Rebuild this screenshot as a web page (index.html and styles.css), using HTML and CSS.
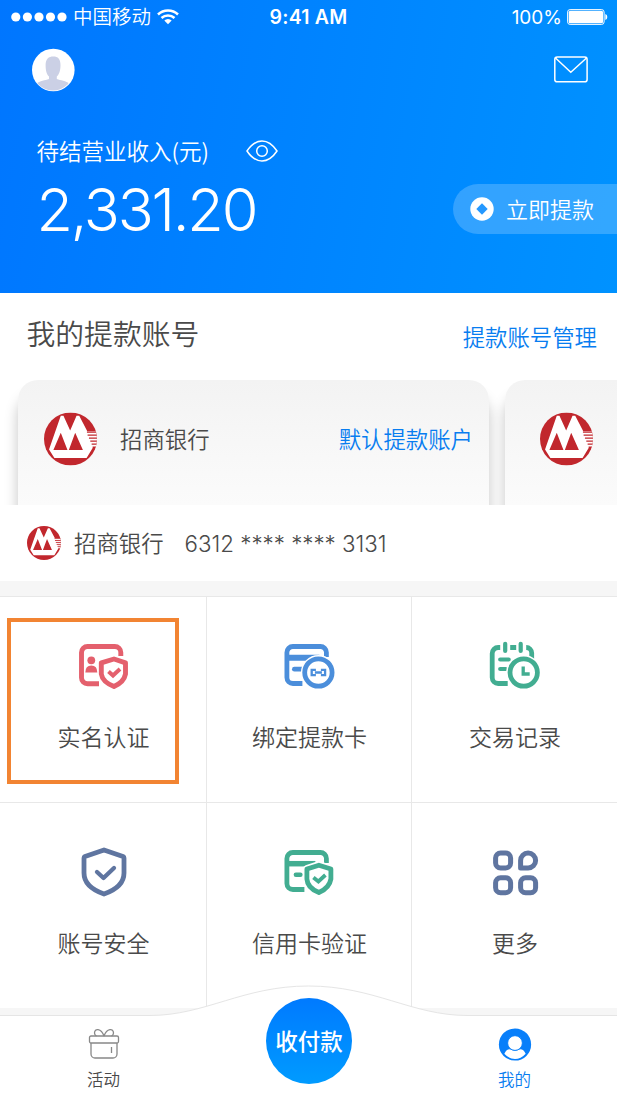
FILE: index.html
```html
<!DOCTYPE html>
<html lang="zh-CN">
<head>
<meta charset="utf-8">
<title>我的</title>
<link rel="stylesheet" href="styles.css">
</head>
<body>
<svg class="defs" width="0" height="0">
  <symbol id="cmb" viewBox="0 0 158 158">
    <clipPath id="disc"><circle cx="79" cy="79" r="79"/></clipPath>
    <g clip-path="url(#disc)">
      <rect width="158" height="158" fill="#c1272d"/>
      <path d="M50 10H58L78 54L97 10H105L129 56H158V106H145L127 136H31L15 110Z" fill="#fff"/>
      <path d="M50 60L70 112H28ZM93 60L116 112H74Z" fill="#c1272d"/>
      <path d="M128 58.500H158M130 67.500H158M134 76.500H158M138 85.500H158M142 94.500H158M145 103.500H158" stroke="#c1272d" stroke-width="4"/>
    </g>
  </symbol>
</svg>
<main class="screen">
  <header class="hero">
    <div class="status">
      <div class="carrier">
        <svg width="56" height="10" viewBox="0 0 56 10" fill="#fff"><circle cx="4.800" cy="5" r="4.600"/><circle cx="16.400" cy="5" r="4.600"/><circle cx="28" cy="5" r="4.600"/><circle cx="39.500" cy="5" r="4.600"/><circle cx="51" cy="5" r="4.600"/></svg>
        <span class="operator">中国移动</span>
        <svg width="22" height="16" viewBox="0 0 22 16" fill="none" stroke="#fff" stroke-width="2.500"><path d="M1 5.500a14.300 14.300 0 0 1 20 0M4.500 9a9.400 9.400 0 0 1 13 0"/><path d="M7.300 11.500a5.300 5.300 0 0 1 7.400 0L11 15.300z" fill="#fff" stroke="none"/></svg>
      </div>
      <span class="time">9:41 AM</span>
      <div class="power">
        <span>100%</span>
        <svg width="41" height="16" viewBox="0 0 41 16"><rect x=".6" y=".6" width="36.500" height="14.800" rx="2.500" fill="none" stroke="#fff" stroke-width="1"/><rect x="1.700" y="1.700" width="34.300" height="12.600" rx="1.500" fill="#fff"/><path d="M38.300 5q2 .5 2 3t-2 3z" fill="#fff"/></svg>
      </div>
    </div>
    <div class="toolbar">
      <svg width="44" height="44" viewBox="0 0 44 44"><clipPath id="face"><circle cx="22" cy="22" r="20.500"/></clipPath><circle cx="22.300" cy="22" r="21.300" fill="#fff"/><g clip-path="url(#face)" fill="#cbd0e5"><path d="M14.600 17c0-6 3-8.500 7.700-8.500s7.200 2.500 7.200 8.500c0 6-1.500 9.500-3.700 11.500V31c4 1.500 9 1.500 13 5v9H5v-9c4-3.500 9-3.500 13-5v-2.500c-2.200-2-3.400-5.500-3.400-11.500z"/></g></svg>
      <svg width="36" height="28" viewBox="0 0 36 28" fill="none" stroke="#fff" stroke-width="1.500"><rect x="1.800" y="1" width="32.300" height="24.800" rx="2.400"/><path d="M2.500 2L17.800 16.200L33.500 2"/></svg>
    </div>
    <div class="income">
      <div>
        <div class="income-label"><span>待结营业收入(元)</span>
          <svg width="34" height="26" viewBox="0 -2 34 26" fill="none" stroke="#fff" stroke-width="1.500"><path d="M2 12C5 7.500 10 2 17 2s12 5.500 15 10c-3 4.500-8 10-15 10S5 16.500 2 12z"/><circle cx="17" cy="12" r="5.300"/></svg>
        </div>
        <div class="amount">2,331.20</div>
      </div>
      <div class="withdraw">
        <svg width="24" height="24" viewBox="0 0 24 24"><circle cx="12" cy="12" r="11.700" fill="#fff"/><path d="M12 6.300L17.700 12L12 17.700L6.300 12Z" fill="#2498ff"/></svg>
        <span>立即提款</span>
      </div>
    </div>
  </header>
  <section class="accounts">
    <div class="heading"><h2>我的提款账号</h2><span class="link">提款账号管理</span></div>
    <div class="cards">
      <div class="card"><svg width="53" height="54"><use href="#cmb"/></svg><span class="bank">招商银行</span><span class="link">默认提款账户</span></div>
      <div class="card next"><svg width="53" height="54"><use href="#cmb"/></svg></div>
    </div>
    <div class="account"><svg width="34" height="34"><use href="#cmb"/></svg><span class="bank">招商银行</span><span class="number">6312 **** **** 3131</span></div>
  </section>
  <section class="grid">
    <div class="cell selected">
      <svg width="50" height="50" viewBox="0 0 50 50" fill="none" stroke="#e4606d" stroke-width="4.900"><path d="M41.800 13V9.500a6 6 0 0 0-6-6H8.500a6 6 0 0 0-6 6v25.300a6 6 0 0 0 6 6H20"/><circle cx="12.300" cy="17.300" r="3.900" fill="#e4606d" stroke="none"/><path d="M6.300 29.500q0-7 6-7t6 7z" fill="#e4606d" stroke="none"/><path d="M35 16L46.500 19.800V31Q45 39 35 43.500Q25 39 23.500 31V19.800Z" stroke-linejoin="round" stroke="#fff" stroke-width="8"/><path d="M35 16L46.500 19.800V31Q45 39 35 43.500Q23.500 39 22.300 31V19.800Z" stroke-linejoin="round" fill="#fff"/><path d="M29.500 28.500L34 32.500L41 26" stroke-width="4"/></svg>
      <span>实名认证</span>
    </div>
    <div class="cell">
      <svg width="50" height="50" viewBox=".6 0 50 50" fill="none" stroke="#4b8edb" stroke-width="4.800"><path d="M42 14V9.500a6 6 0 0 0-6-6H8.500a6 6 0 0 0-6 6V34.500a6 6 0 0 0 6 6H18"/><path d="M2 14.700H35" stroke-width="6"/><path d="M10 26.200H18" stroke-linecap="round"/><circle cx="34" cy="29.500" r="15.500" stroke="#fff" stroke-width="4"/><circle cx="34" cy="29.500" r="13.700" fill="#fff"/><path d="M31.500 26.800H27.300V32.200H31.500M36.500 26.800H40.700V32.200H36.500M30.500 29.500H37.500" stroke-width="2.300"/></svg>
      <span>绑定提款卡</span>
    </div>
    <div class="cell">
      <svg width="50" height="50" viewBox=".3 0 50 50" fill="none" stroke="#42ad91" stroke-width="4.800"><path d="M10.500 4.500H8.500a6 6 0 0 0-6 6V34.500a6 6 0 0 0 6 6H18M20.500 4.500H26.500M36.500 4.500a5.500 5.500 0 0 1 5.500 5.500V16"/><path d="M15.500 .8V8M31 .8V8M10.500 16.500H19M10.500 26H16" stroke-linecap="round" stroke-width="4.200"/><circle cx="34" cy="29.500" r="15.500" stroke="#fff" stroke-width="4"/><circle cx="34" cy="29.500" r="13.700" fill="#fff"/><path d="M33.500 23.500V31H40" stroke-width="3.300"/></svg>
      <span>交易记录</span>
    </div>
    <div class="cell">
      <svg width="50" height="50" viewBox="0 1 50 50" fill="none" stroke="#5f75a0" stroke-width="4.800" stroke-linejoin="round" stroke-linecap="round"><path d="M25 2L44 8.500Q45 9 45 10V25Q45 39 25 46Q5 39 5 25V10Q5 9 6 8.500Z"/><path d="M18 24L24.500 30L35 20" stroke-width="4.300"/></svg>
      <span>账号安全</span>
    </div>
    <div class="cell">
      <svg width="50" height="50" viewBox=".6 0 50 50" fill="none" stroke="#42ad91" stroke-width="4.800"><path d="M42 14V9.500a6 6 0 0 0-6-6H8.500a6 6 0 0 0-6 6V34.500a6 6 0 0 0 6 6H20"/><path d="M2 14.700H31" stroke-width="5.500"/><path d="M11.500 25.700H16" stroke-linecap="round" stroke-width="4.500"/><path d="M34.500 16L46.500 20V30Q45 39 34.500 43.500Q23 39 22.500 30V20Z" stroke="#fff" stroke-width="8" stroke-linejoin="round"/><path d="M34.500 16.200L46.500 20V30Q45 39 34.500 43.500Q23 39 22.500 30V20Z" fill="#fff" stroke-linejoin="round"/><path d="M29 28.500L34 32.500L41 26" stroke-width="3.800"/></svg>
      <span>信用卡验证</span>
    </div>
    <div class="cell">
      <svg width="50" height="50" viewBox="-.6 0 50 50" fill="none" stroke="#5f75a0" stroke-width="5"><rect x="5" y="4" width="15" height="15" rx="5"/><path d="M30 19V11.500A7.500 7.500 0 1 1 37.500 19Z" stroke-linejoin="round"/><rect x="5" y="28.700" width="15" height="15" rx="5"/><rect x="30" y="28.700" width="15" height="15" rx="5"/></svg>
      <span>更多</span>
    </div>
  </section>
  <nav class="tabs">
    <svg class="tabs-shape" width="617" height="112" viewBox="0 0 617 112"><path d="M-2 30.500H150C205 30.500 243 1 308.500 1S412 30.500 467 30.500H619V114H-2Z" fill="#fff" stroke="#e5e5e5"/></svg>
    <div class="tab">
      <svg width="32" height="32" viewBox="0 0 32 32" fill="none" stroke="#888" stroke-width="1.300"><rect x="1.500" y="8" width="29" height="7" rx="1.500"/><path d="M3 15V26a4 4 0 0 0 4 4H25a4 4 0 0 0 4-4V15M23.500 19V25M16 8C13 0 6.500 0 6.500 5q0 2 2 3M16 8c3-8 9.500-8 9.500-3q0 2-2 3"/></svg>
      <span>活动</span>
    </div>
    <div class="pay">收付款</div>
    <div class="tab active">
      <svg width="34" height="34" viewBox="0 0 34 34"><circle cx="17" cy="17" r="16.600" fill="#087ffa"/><path d="M6 26.500Q9 20.500 13.500 22.500Q17 24.500 20.500 22.500Q25 20.500 28 26.500Q23 32 17 32T6 26.500Z" fill="#fff"/><circle cx="17" cy="15.500" r="7.600" fill="#fff" stroke="#087ffa" stroke-width="1"/></svg>
      <span>我的</span>
    </div>
  </nav>
</main>
</body>
</html>
```
FILE: styles.css
```css
* { box-sizing: border-box; }
body { margin: 0; background: #fff; color: #4a4a4a; font-family: "Noto Sans CJK SC", sans-serif; font-weight: 350; }
svg { display: block; flex: none; overflow: visible; }
.defs { position: absolute; }
.screen { width: 617px; height: 1097px; overflow: hidden; }
.hero { height: 293px; color: #fff; background: linear-gradient(100deg, #0076ff, #0092ff); }
.status { height: 34px; padding: 0 9px 0 11px; display: grid; grid-template-columns: 1fr auto 1fr; align-items: center; font-family: Inter, "Noto Sans CJK SC", sans-serif; }
.carrier, .power { display: flex; align-items: center; }
.carrier { gap: 6px; }
.operator { font-size: 19.500px; line-height: 28px; }
.time { font-size: 19.500px; font-weight: 600; letter-spacing: .2px; margin-right: 2px; }
.power { justify-content: flex-end; gap: 5px; font-size: 19px; font-weight: 400; }
.toolbar { height: 72px; padding: 0 28px 0 31px; display: flex; align-items: center; justify-content: space-between; }
.income { padding: 27px 0 0 36.500px; display: flex; justify-content: space-between; }
.income-label { height: 34px; display: flex; align-items: center; gap: 36px; font-size: 22.500px; }
.amount { height: 82px; padding-top: 1px; font: 350 59.500px/82px Inter, sans-serif; letter-spacing: -2.200px; }
.withdraw { width: 164px; height: 50px; margin-top: 51px; padding-left: 17px; display: flex; align-items: center; gap: 12px; border-radius: 25px 0 0 25px; background: rgba(255,255,255,.2); font-size: 22px; line-height: 46px; }
.withdraw span { padding-bottom: 2px; }
.heading { height: 87px; padding: 0 20px 9px 26.500px; display: flex; align-items: center; justify-content: space-between; }
h2 { margin: 0; font-size: 28.800px; font-weight: 350; }
.link { color: #087df0; font-size: 22.400px; }
.heading .link { padding-top: 8px; }
.cards { height: 125px; padding-left: 18px; display: flex; gap: 16px; overflow: hidden; }
.card { flex: none; width: 471px; height: 160px; padding: 32px 16px 0 26px; display: flex; align-items: flex-start; border-radius: 20px 20px 0 0; background: linear-gradient(#f3f3f3, #fbfbfb 125px); box-shadow: 0 16px 14px rgba(0,0,0,.23); }
.next { padding-left: 35px; }
.bank { font-size: 22.400px; line-height: 52px; }
.card .bank { margin-left: 23px; }
.card .link { margin-left: auto; line-height: 52px; }
.account { height: 76px; padding-left: 27px; display: flex; align-items: center; }
.account .bank { margin-left: 13px; padding-bottom: 2px; }
.number { margin-left: 21px; font: 350 22.300px Inter, sans-serif; }
.grid { height: 434px; padding-top: 15px; display: grid; grid-template: 206px 206px / 207px 205px 205px; align-content: start; background: #f6f6f6; }
.cell { padding: 46px 0 0 1px; display: flex; flex-direction: column; align-items: center; gap: 22px; background: #fff; border: solid #e8e8e8; border-width: 1px 1px 0 0; font-size: 23px; line-height: 42px; }
.cell:nth-child(3n) { border-right: 0; }
.selected { position: relative; }
.selected::after { content: ""; box-sizing: border-box; position: absolute; left: 7px; top: 21px; width: 172px; height: 166px; border: 4px solid #f28432; }
.tabs { position: relative; height: 82px; display: grid; grid-template-columns: 207px 204px 206px; justify-items: center; }
.tabs-shape { position: absolute; left: 0; top: -30px; }
.tab { position: relative; padding-top: 13px; display: flex; flex-direction: column; align-items: center; gap: 6px; font-size: 16.500px; line-height: 26px; }
.tab svg { height: 32px; }
.active { color: #087df0; padding-left: 1px; }
.active svg { height: 33px; margin-bottom: -1px; }
.pay { position: relative; width: 86px; height: 86px; margin-top: -17px; border-radius: 50%; background: linear-gradient(#007aff, #009bff); color: #fff; text-align: center; font-size: 22.500px; font-weight: 500; line-height: 84px; }
```
